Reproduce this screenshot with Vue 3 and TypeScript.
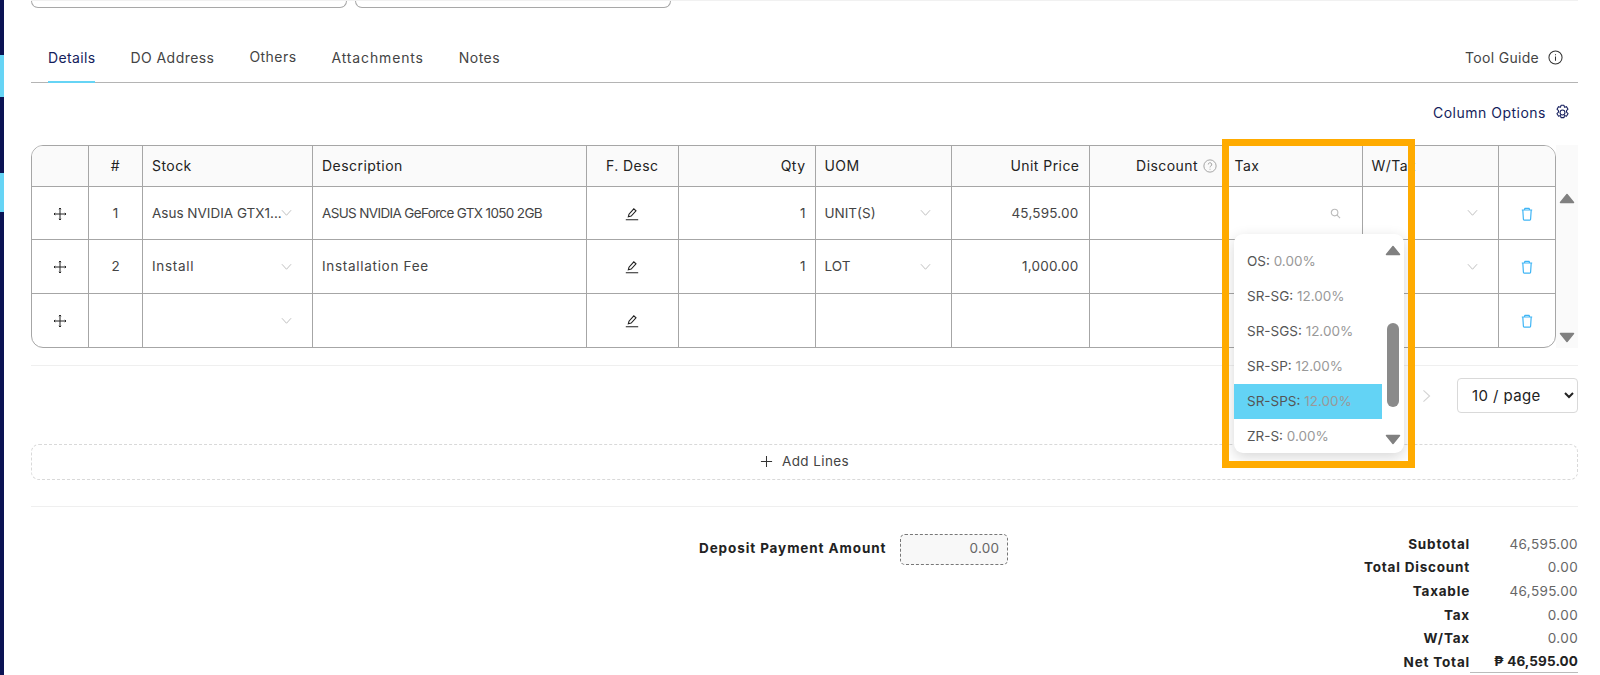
<script setup lang="ts">
interface Row { no: string; stock: string; desc: string; qty: string; uom: string; price: string; caps: boolean; }
const tabs: string[] = ['Details', 'DO Address', 'Others', 'Attachments', 'Notes'];
const rows: Row[] = [
  { no: '1', stock: 'Asus NVIDIA GTX1...', desc: 'ASUS NVIDIA GeForce GTX 1050 2GB', qty: '1', uom: 'UNIT(S)', price: '45,595.00', caps: true },
  { no: '2', stock: 'Install', desc: 'Installation Fee', qty: '1', uom: 'LOT', price: '1,000.00', caps: false },
  { no: '', stock: '', desc: '', qty: '', uom: '', price: '', caps: false },
];
const taxes = [
  { code: 'OS:', rate: '0.00%', active: false },
  { code: 'SR-SG:', rate: '12.00%', active: false },
  { code: 'SR-SGS:', rate: '12.00%', active: false },
  { code: 'SR-SP:', rate: '12.00%', active: false },
  { code: 'SR-SPS:', rate: '12.00%', active: true },
  { code: 'ZR-S:', rate: '0.00%', active: false },
];
const totals = [
  { label: 'Subtotal', value: '46,595.00' },
  { label: 'Total Discount', value: '0.00' },
  { label: 'Taxable', value: '46,595.00' },
  { label: 'Tax', value: '0.00' },
  { label: 'W/Tax', value: '0.00' },
];
</script>

<template>
  <div class="page">
    <div class="rail">
      <span class="seg navy s1"></span>
      <span class="seg sky s2"></span>
      <span class="seg navy s3"></span>
      <span class="seg sky s4"></span>
      <span class="seg navy s5"></span>
    </div>

    <main class="main">
      <div class="top-inputs">
        <div class="stub"></div>
        <div class="stub"></div>
      </div>

      <nav class="tabs">
        <a v-for="(t, i) in tabs" :key="t" class="tab" :class="{ on: i === 0, raised: t === 'Others', long: t === 'Attachments' }">{{ t }}</a>
        <span class="guide">
          Tool Guide
          <svg viewBox="0 0 16 16" width="15" height="15" fill="none" stroke="#333" stroke-width="1.1">
            <circle cx="8" cy="8" r="7" />
            <path d="M8 7v4.500M8 4.400v1.200" />
          </svg>
        </span>
      </nav>

      <div class="options">
        <span>Column Options</span>
        <svg viewBox="0 0 16 16" width="17" height="17" fill="none" stroke="#141d5c" stroke-width="1" stroke-linejoin="round">
          <path d="M6.600 1.200h2.800l.5 1.900 1.800-.6 1.500 2.400-1.400 1.400v1.400l1.400 1.400-1.500 2.400-1.800-.6-.5 1.900H6.600l-.5-1.900-1.800.6-1.500-2.400 1.400-1.400V6.300L2.800 4.900l1.500-2.400 1.800.6z" />
          <circle cx="8" cy="8" r="2.300" />
        </svg>
      </div>

      <div class="table-zone">
        <div class="table-box">
          <table class="grid">
            <colgroup>
              <col class="w1" /><col class="w2" /><col class="w3" /><col class="w4" />
              <col class="w5" /><col class="w6" /><col class="w7" /><col class="w8" />
              <col class="w9" /><col class="w10" /><col class="w11" /><col />
            </colgroup>
            <thead>
              <tr>
                <th></th>
                <th class="c">#</th>
                <th>Stock</th>
                <th>Description</th>
                <th class="c">F. Desc</th>
                <th class="r">Qty</th>
                <th>UOM</th>
                <th class="r">Unit Price</th>
                <th class="r disc">
                  Discount
                  <svg viewBox="0 0 16 16" width="14" height="14" fill="none" stroke="#999" stroke-width="1">
                    <circle cx="8" cy="8" r="7" />
                    <path d="M6 6.300a2 2 0 1 1 3 1.700c-.7.4-1 .8-1 1.600M8 11.200v1" />
                  </svg>
                </th>
                <th>Tax</th>
                <th>W/Tax</th>
                <th></th>
              </tr>
            </thead>
            <tbody>
              <tr v-for="(r, i) in rows" :key="i">
                <td class="c">
                  <svg class="ic" viewBox="0 0 14 14" width="14" height="14" fill="none" stroke="#222" stroke-width="1">
                    <path d="M7 1v12M1 7h12" />
                    <path d="M6 2.200 7 1l1 1.200M6 11.800 7 13l1-1.200M2.200 6 1 7l1.200 1M11.800 6 13 7l-1.200 1" />
                  </svg>
                </td>
                <td class="c">{{ r.no }}</td>
                <td class="stock">
                  <span :class="{ wide: !r.caps }">{{ r.stock }}</span>
                  <svg class="chev" viewBox="0 0 12 12" width="11" height="11" fill="none" stroke="#bbb"><path d="M1 3.500 6 9l5-5.500" /></svg>
                </td>
                <td class="desc" :class="r.caps ? 'tight' : 'wide'">{{ r.desc }}</td>
                <td class="c">
                  <svg class="ic" viewBox="0 0 14 14" width="14" height="14" fill="none" stroke="#222" stroke-width="1.100">
                    <path d="M3.300 9.800 4 7.200 8.800 1.800 11 3.800 6.200 9.100zM.8 12.700h12.400" />
                  </svg>
                </td>
                <td class="r">{{ r.qty }}</td>
                <td class="uom">
                  <span v-if="r.uom">{{ r.uom }}</span>
                  <svg v-if="r.uom" class="chev" viewBox="0 0 12 12" width="11" height="11" fill="none" stroke="#bbb"><path d="M1 3.500 6 9l5-5.500" /></svg>
                </td>
                <td class="r price">{{ r.price }}</td>
                <td></td>
                <td class="taxcell">
                  <svg v-if="i === 0" viewBox="0 0 12 12" width="11" height="11" fill="none" stroke="#bbb" stroke-width="1.200">
                    <circle cx="5" cy="5" r="3.600" /><path d="m7.700 7.700 3.300 3.300" />
                  </svg>
                </td>
                <td class="wtax">
                  <svg v-if="r.uom" class="chev" viewBox="0 0 12 12" width="11" height="11" fill="none" stroke="#bbb"><path d="M1 3.500 6 9l5-5.500" /></svg>
                </td>
                <td class="c">
                  <svg class="ic" viewBox="0 0 14 14" width="14" height="14" fill="none" stroke="#3fb5f5" stroke-width="1.200" stroke-linejoin="round">
                    <path d="M1.800 3h10.400M4.500 3l.3-1.700h4.400L9.500 3M2.800 3l.6 9.300c0 .5.400.8.800.8h5.600c.4 0 .8-.3.800-.8l.6-9.300" />
                  </svg>
                </td>
              </tr>
            </tbody>
          </table>
        </div>
        <div class="outer-scroll">
          <svg class="tri up" viewBox="0 0 16 11" width="16" height="11"><path d="M8 1.500 14.500 9.500h-13z" /></svg>
          <svg class="tri down" viewBox="0 0 16 11" width="16" height="11"><path d="M8 9.500 14.500 1.500h-13z" /></svg>
        </div>
      </div>

      <div class="rule first"></div>

      <div class="pager">
        <svg viewBox="0 0 10 16" width="9" height="14" fill="none" stroke="#d4d4d4" stroke-width="1.300"><path d="m1.500 1.500 7 6.500-7 6.500" /></svg>
        <select class="size"><option>10 / page</option></select>
      </div>

      <div class="add-lines">
        <svg viewBox="0 0 14 14" width="13" height="13" fill="none" stroke="#333" stroke-width="1.100"><path d="M7 1v12M1 7h12" /></svg>
        <span>Add Lines</span>
      </div>

      <div class="rule second"></div>

      <section class="summary">
        <div class="deposit">
          <strong>Deposit Payment Amount</strong>
          <div class="deposit-box">0.00</div>
        </div>
        <dl class="totals">
          <template v-for="t in totals" :key="t.label">
            <dt>{{ t.label }}</dt>
            <dd>{{ t.value }}</dd>
          </template>
          <dt>Net Total</dt>
          <dd class="net">₱ 46,595.00</dd>
        </dl>
      </section>
    </main>

    <div class="tax-menu">
      <div v-for="t in taxes" :key="t.code" class="tax-item" :class="{ active: t.active }">
        {{ t.code }} <span>{{ t.rate }}</span>
      </div>
      <div class="menu-track">
        <svg class="tri up" viewBox="0 0 16 11" width="16" height="11"><path d="M8 1.500 14.500 9.500h-13z" /></svg>
        <span class="thumb"></span>
        <svg class="tri down" viewBox="0 0 16 11" width="16" height="11"><path d="M8 9.500 14.500 1.500h-13z" /></svg>
      </div>
    </div>

    <div class="callout"></div>
  </div>
</template>

<style>
html, body { margin: 0; background: #fff; }
</style>

<style scoped>
.page {
  position: relative;
  display: flex;
  width: 1600px;
  height: 675px;
  overflow: hidden;
  background: #fff;
  font-family: Inter, "Noto Sans", sans-serif;
  font-size: 13.500px;
  color: #333;
}
.rail { display: flex; flex-direction: column; flex: 0 0 4px; height: 100%; }
.seg { display: block; }
.navy { background: #0b1354; }
.sky { background: #66d4f5; }
.s1 { height: 55px; } .s2 { height: 42px; } .s3 { height: 76px; } .s4 { height: 39px; } .s5 { flex: 1; }
.main { flex: 1; min-width: 0; padding: 0 22px 0 27px; }

.top-inputs { display: flex; gap: 8px; height: 7px; border-top: 1px solid #f1f1f1; box-sizing: border-box; }
.stub {
  width: 316px; height: 7px; box-sizing: border-box;
  border: 1px solid #a8a8a8; border-top: 0; border-radius: 0 0 8px 8px;
}
.tabs {
  display: flex; align-items: flex-start; gap: 35px;
  height: 46px; margin-top: 29px; padding-left: 17px;
  border-bottom: 1px solid #b4b4b4;
}
.tab { position: relative; line-height: 44px; height: 46px; font-size: 14px; letter-spacing: .45px; color: #444; }
.tab.raised { line-height: 42px; }
.tab.long { letter-spacing: .85px; }
.tab.on { color: #141d5c; letter-spacing: .35px; }
.tab.on::after {
  content: ""; position: absolute; left: 0; right: 0; bottom: -1px; height: 2px; background: #66d4f5;
}
.guide {
  display: flex; align-items: center; gap: 9px; height: 42px; margin-left: auto; margin-right: 15px;
  font-size: 14px; color: #444; letter-spacing: .3px;
}

.options {
  display: flex; justify-content: flex-end; align-items: center; gap: 8px;
  height: 24px; padding: 17px 7px 21px 0; color: #141d5c; font-size: 14px; letter-spacing: .5px;
}

.table-zone { display: flex; align-items: stretch; }
.table-box {
  width: 1525px; box-sizing: border-box;
  border: 1px solid #a6a6a6; border-radius: 12px; overflow: hidden;
}
.grid { width: 100%; border-collapse: separate; border-spacing: 0; table-layout: fixed; }
.w1 { width: 57px; } .w2 { width: 54px; } .w3 { width: 170px; } .w4 { width: 274px; }
.w5 { width: 91.500px; } .w6 { width: 137px; } .w7 { width: 136px; } .w8 { width: 138px; }
.w9 { width: 136px; } .w10 { width: 137px; } .w11 { width: 136px; }
.grid th, .grid td {
  box-sizing: border-box; padding: 0 9px; text-align: left;
  border-right: 1px solid #a6a6a6; border-bottom: 1px solid #a6a6a6;
  white-space: nowrap; overflow: hidden;
}
.grid th:last-child, .grid td:last-child { border-right: 0; }
.grid tbody tr:last-child td { border-bottom: 0; }
.grid th { height: 41px; padding-bottom: 2px; font-size: 14px; font-weight: 400; color: #222; background: #fafafa; letter-spacing: .45px; }
.grid td { height: 53px; padding-bottom: 1px; color: #444; }
.grid tbody tr:nth-child(2) td { height: 54px; }
.grid .c { text-align: center; padding-left: 0; padding-right: 0; }
.grid .r { text-align: right; }
.grid .disc svg { vertical-align: -2px; }
.grid .disc { padding-right: 8px; }
.grid .price { letter-spacing: .2px; padding-right: 10px; }
.ic { display: inline-block; vertical-align: middle; }
.stock, .uom, .wtax { position: relative; }
.grid td .wide, .grid td.wide { letter-spacing: .7px; }
.grid td.tight { letter-spacing: -.65px; }
.chev { position: absolute; top: 50%; right: 20px; margin-top: -6px; }
.grid td.taxcell { text-align: right; padding-right: 21px; }
.grid td.taxcell svg { vertical-align: middle; }

.outer-scroll { position: relative; flex: 1; background: #fafafa; }
.tri { position: absolute; fill: #808080; stroke: #808080; stroke-width: 1.500; stroke-linejoin: round; }
.outer-scroll .tri { left: 3px; }
.outer-scroll .tri.up { top: 48px; }
.outer-scroll .tri.down { bottom: 5px; }

.rule { height: 1px; background: #efefef; }
.rule.first { margin-top: 17px; }
.pager { display: flex; align-items: center; justify-content: flex-end; gap: 26px; margin-top: 12px; height: 35px; }
.size {
  width: 121px; height: 35px; box-sizing: border-box; padding: 0 6px 0 10px;
  background: #fff; border: 1px solid #d9d9d9; border-radius: 4px;
  font: 15px Inter, "Noto Sans", sans-serif; letter-spacing: .4px; color: #222;
}
.add-lines {
  display: flex; align-items: center; justify-content: center; gap: 9px;
  height: 36px; margin-top: 31px; padding-bottom: 2px; box-sizing: border-box;
  border: 1px dashed #d9d9d9; border-radius: 8px; color: #444; letter-spacing: .4px;
}
.rule.second { margin-top: 26px; }

.summary { display: flex; justify-content: space-between; align-items: flex-start; margin-top: 25px; }
.deposit { display: flex; align-items: center; gap: 14px; margin-left: 668px; margin-top: 2px; }
.deposit strong { padding-bottom: 4px; font-weight: 700; letter-spacing: .9px; color: #222; }
.deposit-box {
  width: 108px; height: 31px; box-sizing: border-box; padding: 0 8px 4px 0;
  display: flex; align-items: center; justify-content: flex-end;
  background: #f8f8f8; border: 1px dashed #777; border-radius: 5px; color: #666; letter-spacing: .3px;
}
.totals {
  display: grid; grid-template-columns: auto 108px; grid-auto-rows: 23.600px;
  align-items: center; margin: 0;
}
.totals dt { font-weight: 700; letter-spacing: .8px; color: #222; text-align: right; }
.totals dd { margin: 0; text-align: right; color: #666; letter-spacing: .35px; }
.totals dd.net { font-weight: 700; color: #222; border-bottom: 1px solid #bbb; height: 22px; line-height: 22px; letter-spacing: .1px; }

.tax-menu {
  position: absolute; left: 1234px; top: 234px; width: 170px; height: 219px;
  padding-top: 10px; box-sizing: border-box; overflow: hidden;
  background: #fff; border-radius: 9px;
  box-shadow: 0 4px 14px rgba(0, 0, 0, .16);
}
.tax-item {
  width: 148px; height: 35px; line-height: 35px; box-sizing: border-box; padding-left: 13px;
  color: #555;
}
.tax-item span { color: #999; }
.tax-item.active { background: #63d3f5; }
.menu-track { position: absolute; left: 148px; top: 0; right: 0; bottom: 0; }
.menu-track .tri { left: 3px; }
.menu-track .tri.up { top: 11px; }
.menu-track .tri.down { bottom: 8px; }
.thumb {
  position: absolute; left: 5px; top: 89px; width: 12px; height: 84px;
  background: #8a8a8a; border-radius: 6px;
}
.callout {
  position: absolute; left: 1222px; top: 139px; width: 193px; height: 329px;
  box-sizing: border-box; border: 7px solid #ffab00; pointer-events: none;
}
</style>
